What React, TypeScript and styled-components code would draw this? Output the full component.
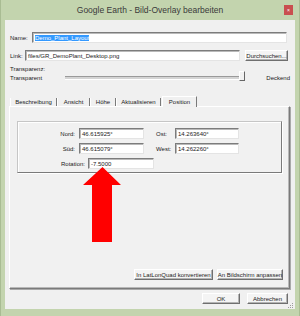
import styled, { createGlobalStyle } from "styled-components";

const GlobalStyle = createGlobalStyle`
  html, body {
    margin: 0;
    padding: 0;
    background: #ffffff;
  }
  body {
    font-family: "Liberation Sans", Arial, sans-serif;
  }
`;

const Window = styled.div`
  position: relative;
  width: 300px;
  height: 316px;
  box-sizing: border-box;
  display: flex;
  flex-direction: column;
  padding: 0 5px 7px 5px;
  background: #c3d4ae;
  box-shadow: inset 1px 0 0 #a9bc93, inset -1px 0 0 #a9bc93;
`;

const TitleBar = styled.div`
  height: 20px;
  display: grid;
  grid-template-columns: 1fr auto 1fr;
  align-items: center;
`;

const Title = styled.div`
  grid-column: 2;
  font-family: "Liberation Sans", Arial, sans-serif;
  font-size: 8.5px;
  color: #3a3a3a;
  white-space: nowrap;
`;

const CloseButton = styled.div`
  grid-column: 3;
  justify-self: end;
  width: 9px;
  height: 10px;
  margin-right: 2px;
  background: #c94f4f;
  display: flex;
  align-items: center;
  justify-content: center;
  color: #ffffff;
  font-size: 5px;
  line-height: 1;
`;

const Client = styled.div`
  flex: 1;
  display: flex;
  flex-direction: column;
  padding: 0 5px;
  background: #f0f0f0;
  font-size: 6px;
  color: #1a1a1a;
`;

const FieldRow = styled.div<{ $top: number }>`
  display: flex;
  align-items: center;
  height: 11px;
  margin-top: ${(p) => p.$top}px;
`;

const Label = styled.span<{ $width?: number; $right?: boolean }>`
  width: ${(p) => (p.$width ? `${p.$width}px` : "auto")};
  flex-shrink: 0;
  text-align: ${(p) => (p.$right ? "right" : "left")};
  white-space: nowrap;
`;

const TextInput = styled.div<{ $width?: number; $endGap?: number }>`
  ${(p) => (p.$width ? `width: ${p.$width}px;` : "flex: 1;")}
  margin-right: ${(p) => p.$endGap ?? 0}px;
  flex-shrink: 0;
  height: 11px;
  box-sizing: border-box;
  display: flex;
  align-items: center;
  padding-left: 2px;
  background: #ffffff;
  border: 1px solid;
  border-color: #7c7c7c #e4e4e4 #e4e4e4 #7c7c7c;
  box-shadow: inset 1px 1px 0 #b9b9b9;
  white-space: nowrap;
  overflow: hidden;
`;

const Selected = styled.span`
  background: #3399ff;
  color: #ffffff;
`;

const Button = styled.div<{ $width: number }>`
  width: ${(p) => p.$width}px;
  height: 11px;
  box-sizing: border-box;
  display: flex;
  align-items: center;
  justify-content: center;
  background: #f4f4f4;
  border: 1px solid;
  border-color: #ffffff #6f6f6f #6f6f6f #ffffff;
  box-shadow: inset -1px -1px 0 #b4b4b4;
  white-space: nowrap;
`;

const PlainLine = styled.div`
  height: 8px;
  line-height: 8px;
  margin-top: 4px;
`;

const SliderRow = styled.div`
  display: flex;
  align-items: center;
  height: 10px;
`;

const Track = styled.div`
  position: relative;
  width: 178px;
  height: 2px;
  background: #d4d4d4;
  border-top: 1px solid #9a9a9a;
  border-bottom: 1px solid #ffffff;
`;

const Thumb = styled.div`
  position: absolute;
  left: 174px;
  top: -6px;
  width: 6px;
  height: 10px;
  box-sizing: border-box;
  background: #f2f2f2;
  border: 1px solid;
  border-color: #ffffff #666666 #666666 #ffffff;
`;

const TabArea = styled.div`
  margin: 13px 0 0 -1px;
  display: flex;
  flex-direction: column;
`;

const TabStrip = styled.div`
  display: flex;
  align-items: flex-end;
  height: 10px;
  padding-left: 1px;
`;

const Tab = styled.div<{ $width: number; $active?: boolean }>`
  width: ${(p) => p.$width}px;
  box-sizing: border-box;
  height: ${(p) => (p.$active ? 11 : 8)}px;
  margin-bottom: ${(p) => (p.$active ? -1 : 0)}px;
  display: flex;
  align-items: center;
  justify-content: center;
  background: #f0f0f0;
  border-left: 1px solid #ffffff;
  border-right: 1px solid #7a7a7a;
  border-top: ${(p) => (p.$active ? "1px solid #ffffff" : "none")};
  position: relative;
  z-index: ${(p) => (p.$active ? 1 : 0)};
  white-space: nowrap;
`;

const Panel = styled.div`
  height: 183px;
  box-sizing: border-box;
  display: flex;
  flex-direction: column;
  background: #f1f1f1;
  border: 1px solid;
  border-color: #ffffff #7a7a7a #7a7a7a #ffffff;
  box-shadow: inset -1px -1px 0 #b8b8b8, 1px 1px 0 #a9a9a9;
`;

const GroupBox = styled.div`
  margin: 14px 7px 0 7px;
  height: 52px;
  box-sizing: border-box;
  padding-top: 6px;
  display: flex;
  flex-direction: column;
  gap: 4px;
  border: 1px solid;
  border-color: #c6c6c6 #7a7a7a #7a7a7a #c6c6c6;
  box-shadow: 1px 1px 0 #ffffff, inset 1px 1px 0 #ffffff;
`;

const CoordRow = styled.div`
  display: flex;
  align-items: center;
  height: 11px;
`;

const Spacer = styled.div<{ $width: number }>`
  width: ${(p) => p.$width}px;
  flex-shrink: 0;
`;

const PanelButtons = styled.div`
  margin-top: auto;
  margin-bottom: 8px;
  padding-right: 6px;
  display: flex;
  justify-content: flex-end;
  gap: 4px;
`;

const DialogButtons = styled.div`
  margin-top: 4px;
  padding-right: 2px;
  display: flex;
  justify-content: flex-end;
  gap: 7px;
`;

const Grip = styled.svg`
  position: absolute;
  right: 6px;
  bottom: 7px;
`;

const Annotation = styled.svg`
  position: absolute;
  left: 83px;
  top: 167px;
`;

function App() {
  const tabs = [
    { name: "Beschreibung", width: 47 },
    { name: "Ansicht", width: 33 },
    { name: "Höhe", width: 26 },
    { name: "Aktualisieren", width: 45 },
  ];

  return (
    <>
      <GlobalStyle />
      <Window>
        <TitleBar>
          <Title>Google Earth - Bild-Overlay bearbeiten</Title>
          <CloseButton>×</CloseButton>
        </TitleBar>
        <Client>
          <FieldRow $top={12}>
            <Label $width={22}>Name:</Label>
            <TextInput $endGap={3}>
              <Selected>Demo_Plant_Layout</Selected>
            </TextInput>
          </FieldRow>
          <FieldRow $top={7}>
            <Label $width={15}>Link:</Label>
            <TextInput $width={215}>files/GR_DemoPlant_Desktop.png</TextInput>
            <Spacer $width={5} />
            <Button $width={43}>Durchsuchen...</Button>
          </FieldRow>
          <PlainLine>Transparenz:</PlainLine>
          <SliderRow>
            <Label $width={55}>Transparent</Label>
            <Track>
              <Thumb />
            </Track>
            <Spacer $width={24} />
            <Label>Deckend</Label>
          </SliderRow>
          <TabArea>
            <TabStrip>
              {tabs.map((t) => (
                <Tab key={t.name} $width={t.width}>
                  {t.name}
                </Tab>
              ))}
              <Spacer $width={1} />
              <Tab $width={35} $active>
                Position
              </Tab>
            </TabStrip>
            <Panel>
              <GroupBox>
                <CoordRow>
                  <Label $width={57} $right>
                    Nord:
                  </Label>
                  <Spacer $width={4} />
                  <TextInput $width={65}>46.615925°</TextInput>
                  <Spacer $width={12} />
                  <Label $width={19}>Ost:</Label>
                  <TextInput $width={64}>14.263640°</TextInput>
                </CoordRow>
                <CoordRow>
                  <Label $width={57} $right>
                    Süd:
                  </Label>
                  <Spacer $width={4} />
                  <TextInput $width={65}>46.615079°</TextInput>
                  <Spacer $width={12} />
                  <Label $width={19}>West:</Label>
                  <TextInput $width={64}>14.262260°</TextInput>
                </CoordRow>
                <CoordRow>
                  <Label $width={67} $right>
                    Rotation:
                  </Label>
                  <Spacer $width={3} />
                  <TextInput $width={66}>-7.5000</TextInput>
                </CoordRow>
              </GroupBox>
              <PanelButtons>
                <Button $width={79}>In LatLonQuad konvertieren</Button>
                <Button $width={66}>An Bildschirm anpassen</Button>
              </PanelButtons>
            </Panel>
          </TabArea>
          <DialogButtons>
            <Button $width={38}>OK</Button>
            <Button $width={41}>Abbrechen</Button>
          </DialogButtons>
        </Client>
        <Grip width="7" height="7" viewBox="0 0 7 7">
          {[
            [5, 1],
            [3, 3],
            [5, 3],
            [1, 5],
            [3, 5],
            [5, 5],
          ].map(([x, y]) => (
            <rect key={`${x}-${y}`} x={x} y={y} width="1" height="1" fill="#9c9c9c" />
          ))}
        </Grip>
        <Annotation width="38" height="75" viewBox="0 0 38 75">
          <polygon points="19.5,0 38,18 29,18 29,75 9,75 9,18 0,18" fill="#ff0000" />
        </Annotation>
      </Window>
    </>
  );
}

export default App;
